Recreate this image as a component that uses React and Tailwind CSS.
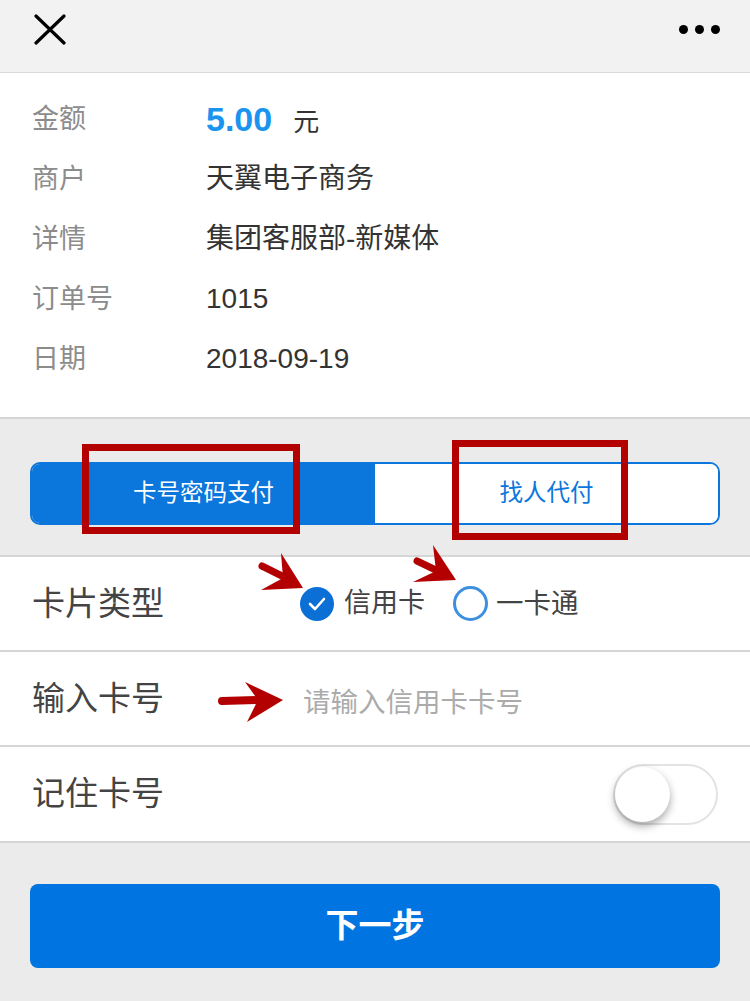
import React, { useState } from 'react';

const CJK = { fontFamily: '"Liberation Sans", "Noto Sans CJK SC", sans-serif' };

const InfoRow = ({ label, children }) => (
  <div className="flex h-[60px] items-center">
    <div className="w-[174px] text-[27px] text-[#8c8c8c]">{label}</div>
    <div className="text-[28px] text-[#333]">{children}</div>
  </div>
);

// red annotation marks drawn over the page
const Annotations = () => (
  <div className="pointer-events-none absolute inset-0">
    <div className="absolute left-[82px] top-[444px] h-[90px] w-[218px] border-[7px] border-[#b30000]" />
    <div className="absolute left-[452px] top-[440px] h-[100px] w-[176px] border-[7px] border-[#b30000]" />
    <svg className="absolute left-0 top-0" width="750" height="1001" viewBox="0 0 750 1001">
      {/* arrow to 信用卡 */}
      <path d="M262 566 L290 580" stroke="#b30000" strokeWidth="7" strokeLinecap="round" />
      <path d="M281 553 L303 588 L261 590 L283 578 Z" fill="#b30000" />
      {/* arrow to 一卡通 */}
      <path d="M417 561 L444 574" stroke="#b30000" strokeWidth="7" strokeLinecap="round" />
      <path d="M433 545 L456 580 L413 582 L436 571 Z" fill="#b30000" />
      {/* arrow to input */}
      <path d="M222 701 L260 700" stroke="#b30000" strokeWidth="8" strokeLinecap="round" />
      <path d="M245 682 L283 700 L247 722 L258 700 Z" fill="#b30000" />
    </svg>
  </div>
);

const Radio = ({ checked }) =>
  checked ? (
    <span className="flex h-[34px] w-[34px] items-center justify-center rounded-full bg-[#0b6fd6]">
      <svg width="18" height="14" viewBox="0 0 18 14">
        <path d="M2 7 L7 12 L16 2" stroke="#fff" strokeWidth="2.6" fill="none" strokeLinecap="round" strokeLinejoin="round" />
      </svg>
    </span>
  ) : (
    <span className="h-[35px] w-[35px] rounded-full border-[3px] border-[#3d8fe0]" />
  );

export default function App() {
  const [tab, setTab] = useState(0);
  const [card, setCard] = useState(0);
  const [remember, setRemember] = useState(false);

  return (
    <div className="relative h-[1001px] w-[750px] overflow-hidden bg-[#ebebeb]" style={CJK}>
      {/* Top bar */}
      <div className="flex h-[73px] items-center justify-between border-b border-[#d9d9d9] bg-[#f2f2f2] pb-[13px] pl-[34px] pr-[30px]">
        <svg width="32" height="31" viewBox="0 0 32 31">
          <path d="M2 2 L30 29 M30 2 L2 29" stroke="#000" strokeWidth="3.2" strokeLinecap="round" />
        </svg>
        <div className="flex gap-[7px]">
          <span className="h-[9px] w-[9px] rounded-full bg-black" />
          <span className="h-[9px] w-[9px] rounded-full bg-black" />
          <span className="h-[9px] w-[9px] rounded-full bg-black" />
        </div>
      </div>

      {/* Order info */}
      <div className="border-b-2 border-[#d6d6d6] bg-white pb-[28px] pl-[32px] pt-[16px]">
        <InfoRow label="金额">
          <span className="text-[34px] font-bold text-[#1a94ee]">5.00</span>
          <span className="ml-[21px] text-[26px] text-[#333]">元</span>
        </InfoRow>
        <InfoRow label="商户">天翼电子商务</InfoRow>
        <InfoRow label="详情">集团客服部-新媒体</InfoRow>
        <InfoRow label="订单号">1015</InfoRow>
        <InfoRow label="日期">2018-09-19</InfoRow>
      </div>

      {/* Segmented control */}
      <div className="px-[30px] pb-[30px] pt-[43px]">
        <div className="flex h-[63px] overflow-hidden rounded-[10px] border-2 border-[#0b76dc]">
          <button
            onClick={() => setTab(0)}
            className={`flex-1 text-[23.5px] ${tab === 0 ? 'bg-[#0b76dc] text-white' : 'bg-white text-[#0b76dc]'}`}
          >
            卡号密码支付
          </button>
          <button
            onClick={() => setTab(1)}
            className={`flex-1 text-[23.5px] ${tab === 1 ? 'bg-[#0b76dc] text-white' : 'bg-white text-[#0b76dc]'}`}
          >
            找人代付
          </button>
        </div>
      </div>

      {/* Form rows */}
      <div className="bg-white">
        <div className="flex h-[97px] items-center border-y-2 border-[#d6d6d6] pl-[32px]">
          <div className="w-[268px] text-[33px] text-[#444]">卡片类型</div>
          <button onClick={() => setCard(0)} className="flex items-center">
            <Radio checked={card === 0} />
            <span className="ml-[10px] text-[27px] text-[#444]">信用卡</span>
          </button>
          <button onClick={() => setCard(1)} className="ml-[28px] flex items-center">
            <Radio checked={card === 1} />
            <span className="ml-[8px] text-[27.5px] text-[#444]">一卡通</span>
          </button>
        </div>
        <div className="flex h-[95px] items-center border-b-2 border-[#d6d6d6] pl-[32px]">
          <div className="w-[271px] text-[33px] text-[#444]">输入卡号</div>
          <input
            className="mt-[8px] flex-1 bg-transparent text-[27.5px] text-[#333] outline-none placeholder:text-[#ababab]"
            placeholder="请输入信用卡卡号"
          />
        </div>
        <div className="flex h-[96px] items-center justify-between border-b-2 border-[#d6d6d6] pl-[32px] pr-[32px]">
          <div className="text-[33px] text-[#444]">记住卡号</div>
          <button
            onClick={() => setRemember(!remember)}
            className={`relative h-[61px] w-[105px] rounded-full border-2 ${remember ? 'border-[#0b76dc] bg-[#0b76dc]' : 'border-[#e3e3e3] bg-white'}`}
          >
            <span
              className={`absolute top-[1px] h-[55px] w-[55px] rounded-full bg-white shadow-[0_4px_8px_rgba(0,0,0,0.35)] ${remember ? 'left-[46px]' : 'left-[0px]'}`}
            />
          </button>
        </div>
      </div>

      {/* Next button */}
      <div className="px-[30px] pt-[41px]">
        <button className="h-[84px] w-full rounded-[8px] bg-[#0074e0] text-[33px] font-bold text-white">
          下一步
        </button>
      </div>

      <Annotations />
    </div>
  );
}
